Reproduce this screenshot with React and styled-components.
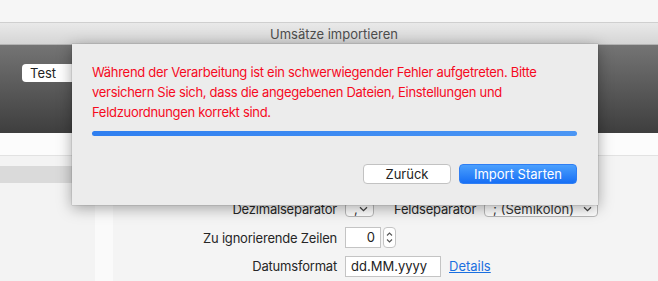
import React from 'react'
import styled, { createGlobalStyle } from 'styled-components'

const GlobalStyle = createGlobalStyle`
  html, body {
    margin: 0;
    padding: 0;
    background: #f6f6f6;
    font-family: Inter, "Liberation Sans", sans-serif;
    -webkit-font-smoothing: antialiased;
  }
`

const Screen = styled.div`
  position: relative;
  width: 658px;
  height: 281px;
  overflow: hidden;
  display: flex;
  flex-direction: column;
`

const BackWindow = styled.div`
  height: 22px;
  background: #f6f6f6;
  border-bottom: 1px solid #cfcfcf;
`

const TitleBar = styled.div`
  height: 21px;
  background: linear-gradient(#e9e9e9, #d5d5d5);
  border-bottom: 1px solid #b3b3b3;
  display: flex;
  align-items: center;
  justify-content: center;
  font-size: 13px;
  color: #4d4d4d;
  padding-left: 10px;
`

const Toolbar = styled.div`
  height: 88px;
  background: linear-gradient(#747474, #3e3e3e);
  padding: 19px 0 0 22px;
  box-sizing: border-box;
`

const TagField = styled.div`
  width: 60px;
  height: 18px;
  background: #fff;
  border-radius: 4px 0 0 4px;
  font-size: 13px;
  color: #222;
  padding-left: 8px;
  line-height: 18px;
  box-sizing: border-box;
`

const HeaderStrip = styled.div`
  height: 22px;
  background: #fcfcfc;
  border-bottom: 1px solid #e2e2e2;
`

const Body = styled.div`
  flex: 1;
  display: grid;
  grid-template-columns: 95px 18px 1fr;
`

const Sidebar = styled.div`
  background: #f3f3f3;
  padding-top: 10px;
`

const SidebarRow = styled.div`
  height: 17px;
  background: ${p => (p.$selected ? '#dadada' : 'transparent')};
`

const Gutter = styled.div`
  background: #fafafa;
`

const Content = styled.div`
  background: #f4f4f4;
  padding-top: 39px;
  display: grid;
  grid-template-columns: 224px auto;
  grid-auto-rows: 28.5px;
  column-gap: 8px;
  align-items: center;
`

const Label = styled.div`
  text-align: right;
  font-size: 13px;
  letter-spacing: -0.2px;
  color: #262626;
`

const Controls = styled.div`
  display: flex;
  align-items: center;
  gap: 8px;
`

const Popup = styled.div`
  height: 15px;
  width: ${p => p.$w}px;
  box-sizing: border-box;
  border: 1px solid #b9b9b9;
  border-radius: 4px;
  background: #fff;
  font-size: 13px;
  color: #333;
  display: flex;
  align-items: center;
  justify-content: space-between;
  padding: 0 5px 0 8px;
  line-height: 1;
`

const Chevron = () => (
  <svg width="9" height="6" viewBox="0 0 9 6">
    <path d="M1 1.2 L4.5 4.6 L8 1.2" fill="none" stroke="#444" strokeWidth="1.3" />
  </svg>
)

const TextBox = styled.div`
  width: ${p => p.$w}px;
  height: 21px;
  box-sizing: border-box;
  border: 1px solid #c4c4c4;
  background: #fff;
  font-size: 13px;
  color: #222;
  line-height: 19px;
  padding: 0 5px;
  text-align: ${p => (p.$right ? 'right' : 'left')};
`

const Stepper = styled.div`
  width: 11px;
  height: 19px;
  margin-left: -6px;
  border: 1px solid #c4c4c4;
  border-radius: 4px;
  background: #fff;
  display: flex;
  align-items: center;
  justify-content: center;
`

const DetailsLink = styled.a`
  font-size: 13px;
  color: #1a6fe0;
  text-decoration: underline;
`

const Sheet = styled.div`
  position: absolute;
  left: 72px;
  top: 44px;
  width: 526px;
  height: 161px;
  box-sizing: border-box;
  background: #ececec;
  box-shadow: 0 3px 14px rgba(0, 0, 0, 0.35), 0 0 1px rgba(0, 0, 0, 0.4);
  padding: 18px 21px 0 20px;
  display: flex;
  flex-direction: column;
`

const ErrorText = styled.p`
  margin: 0;
  font-size: 13px;
  line-height: 20px;
  letter-spacing: -0.3px;
  color: #f60a1e;
`

const Progress = styled.div`
  margin-top: 9px;
  height: 5px;
  border-radius: 3px;
  background: linear-gradient(90deg, #2f7ff0, #4b96f4);
`

const ButtonRow = styled.div`
  margin-top: 28px;
  display: flex;
  justify-content: flex-end;
  gap: 8px;
`

const Button = styled.button`
  height: 20px;
  width: ${p => p.$w}px;
  border-radius: 4px;
  font-family: inherit;
  font-size: 13px;
  padding: 0;
  border: 1px solid ${p => (p.$primary ? '#2f7ef3' : '#c2c2c2')};
  background: ${p => (p.$primary ? 'linear-gradient(#4ba0fd, #176ff5)' : '#fff')};
  color: ${p => (p.$primary ? '#fff' : '#222')};
`

const StepperIcon = () => (
  <svg width="7" height="13" viewBox="0 0 7 13">
    <path d="M1 4.5 L3.5 2 L6 4.5 M1 8.5 L3.5 11 L6 8.5" fill="none" stroke="#555" strokeWidth="1.1" />
  </svg>
)

export default function App() {
  return (
    <>
      <GlobalStyle />
      <Screen>
        <BackWindow />
        <TitleBar>Umsätze importieren</TitleBar>
        <Toolbar>
          <TagField>Test</TagField>
        </Toolbar>
        <HeaderStrip />
        <Body>
          <Sidebar>
            <SidebarRow $selected />
          </Sidebar>
          <Gutter />
          <Content>
            <Label>Dezimalseparator</Label>
            <Controls>
              <Popup $w={29}>
                <span>,</span>
                <Chevron />
              </Popup>
              <Label style={{ marginLeft: 12 }}>Feldseparator</Label>
              <Popup $w={114}>
                <span>; (Semikolon)</span>
                <Chevron />
              </Popup>
            </Controls>
            <Label>Zu ignorierende Zeilen</Label>
            <Controls>
              <TextBox $w={36} $right>0</TextBox>
              <Stepper>
                <StepperIcon />
              </Stepper>
            </Controls>
            <Label>Datumsformat</Label>
            <Controls>
              <TextBox $w={96}>dd.MM.yyyy</TextBox>
              <DetailsLink>Details</DetailsLink>
            </Controls>
          </Content>
        </Body>
        <Sheet>
          <ErrorText>
            Während der Verarbeitung ist ein schwerwiegender Fehler aufgetreten. Bitte
            versichern Sie sich, dass die angegebenen Dateien, Einstellungen und
            Feldzuordnungen korrekt sind.
          </ErrorText>
          <Progress />
          <ButtonRow>
            <Button $w={88}>Zurück</Button>
            <Button $w={118} $primary>Import Starten</Button>
          </ButtonRow>
        </Sheet>
      </Screen>
    </>
  )
}
